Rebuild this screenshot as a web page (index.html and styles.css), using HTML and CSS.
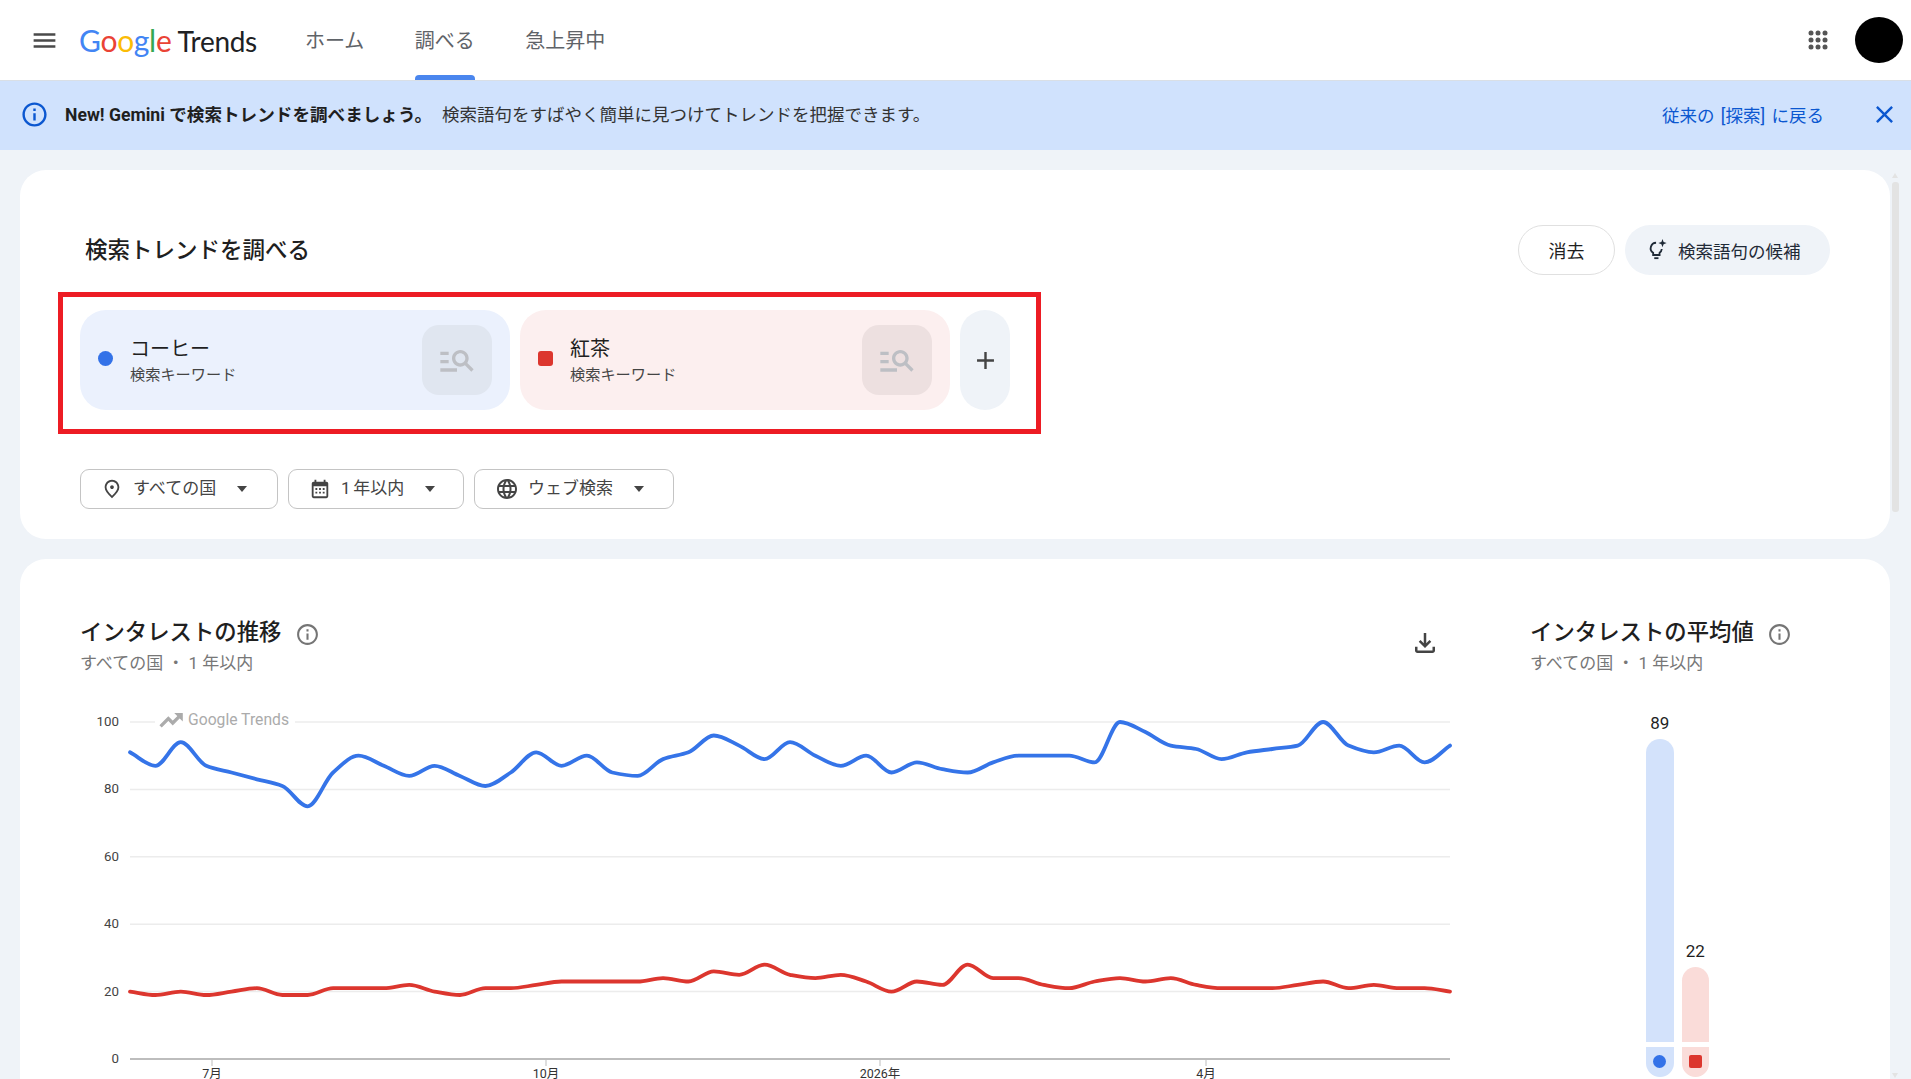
FILE: index.html
```html
<!DOCTYPE html>
<html lang="ja">
<head>
<meta charset="utf-8">
<title>Google Trends</title>
<link rel="stylesheet" href="styles.css">
</head>
<body>
<header class="topbar">
  <svg class="menu-icon" viewBox="0 0 24 24"><path d="M3 18h18v-2H3v2zm0-5h18v-2H3v2zm0-7v2h18V6H3z"/></svg>
  <div class="logo"><span class="c-blue">G</span><span class="c-red">o</span><span class="c-yellow">o</span><span class="c-blue">g</span><span class="c-green">l</span><span class="c-red">e</span><span class="logo-trends">Trends</span></div>
  <nav class="nav">
    <a class="nav-item">ホーム</a>
    <a class="nav-item nav-active">調べる</a>
    <a class="nav-item">急上昇中</a>
  </nav>
  <div class="topbar-right">
    <svg class="apps-icon" viewBox="0 0 20 20"><circle cx="3" cy="3" r="2.5"/><circle cx="10" cy="3" r="2.5"/><circle cx="17" cy="3" r="2.5"/><circle cx="3" cy="10" r="2.5"/><circle cx="10" cy="10" r="2.5"/><circle cx="17" cy="10" r="2.5"/><circle cx="3" cy="17" r="2.5"/><circle cx="10" cy="17" r="2.5"/><circle cx="17" cy="17" r="2.5"/></svg>
    <div class="avatar"></div>
  </div>
</header>

<div class="banner">
  <svg class="banner-info" viewBox="0 0 24 24"><path d="M11 7h2v2h-2zm0 4h2v6h-2zm1-9C6.48 2 2 6.48 2 12s4.48 10 10 10 10-4.48 10-10S17.52 2 12 2zm0 18c-4.41 0-8-3.59-8-8s3.59-8 8-8 8 3.59 8 8-3.59 8-8 8z"/></svg>
  <strong class="banner-strong">New! Gemini で検索トレンドを調べましょう。</strong>
  <span class="banner-text">検索語句をすばやく簡単に見つけてトレンドを把握できます。</span>
  <a class="banner-link">従来の [探索] に戻る</a>
  <svg class="banner-close" viewBox="0 0 24 24"><path d="M19 6.41L17.59 5 12 10.59 6.41 5 5 6.41 10.59 12 5 17.59 6.41 19 12 13.41 17.59 19 19 17.59 13.41 12z"/></svg>
</div>

<main class="main">
  <div class="content">
    <section class="card card-search">
      <div class="search-head">
        <h1 class="search-title">検索トレンドを調べる</h1>
        <div class="search-actions">
          <button class="btn-clear">消去</button>
          <button class="btn-suggest">
            <svg class="bulb-icon" viewBox="0 0 24 24"><path class="bulb-line" d="M11 5.2a6 6 0 0 0-3.2 11v2.3h7v-2.3a6 6 0 0 0 2.4-4.2"/><path class="bulb-line" d="M9 22h4.6"/><path d="M18 1l1.2 3.3 3.3 1.2-3.3 1.2L18 10l-1.2-3.3-3.3-1.2 3.3-1.2z"/></svg>
            <span>検索語句の候補</span>
          </button>
        </div>
      </div>

      <div class="terms">
        <div class="term term-blue">
          <span class="marker marker-dot"></span>
          <div class="term-text">
            <div class="term-name">コーヒー</div>
            <div class="term-type">検索キーワード</div>
          </div>
          <div class="term-search"><svg viewBox="0 0 24 24"><path d="M7 9H2V7h5v2zm0 3H2v2h5v-2zm13.59 7l-3.83-3.83c-.8.52-1.74.83-2.76.83-2.76 0-5-2.24-5-5s2.24-5 5-5 5 2.24 5 5c0 1.02-.31 1.96-.83 2.75L22 17.59 20.59 19zM17 11c0-1.65-1.35-3-3-3s-3 1.35-3 3 1.35 3 3 3 3-1.35 3-3zM2 19h10v-2H2v2z"/></svg></div>
        </div>
        <div class="term term-red">
          <span class="marker marker-square"></span>
          <div class="term-text">
            <div class="term-name">紅茶</div>
            <div class="term-type">検索キーワード</div>
          </div>
          <div class="term-search"><svg viewBox="0 0 24 24"><path d="M7 9H2V7h5v2zm0 3H2v2h5v-2zm13.59 7l-3.83-3.83c-.8.52-1.74.83-2.76.83-2.76 0-5-2.24-5-5s2.24-5 5-5 5 2.24 5 5c0 1.02-.31 1.96-.83 2.75L22 17.59 20.59 19zM17 11c0-1.65-1.35-3-3-3s-3 1.35-3 3 1.35 3 3 3 3-1.35 3-3zM2 19h10v-2H2v2z"/></svg></div>
        </div>
        <div class="term-add"><svg viewBox="0 0 24 24"><path d="M19 13h-6v6h-2v-6H5v-2h6V5h2v6h6v2z"/></svg></div>
        <div class="highlight"></div>
      </div>

      <div class="filters">
        <button class="filter filter-geo">
          <svg class="filter-icon" viewBox="0 0 24 24"><path d="M12 12c-1.1 0-2-.9-2-2s.9-2 2-2 2 .9 2 2-.9 2-2 2zm6-1.8C18 6.57 15.35 4 12 4s-6 2.57-6 6.2c0 2.34 1.95 5.44 6 9.14 4.05-3.7 6-6.8 6-9.14zM12 2c4.2 0 8 3.22 8 8.2 0 3.32-2.67 7.25-8 11.8-5.33-4.55-8-8.48-8-11.8C4 5.22 7.8 2 12 2z"/></svg>
          <span class="filter-label">すべての国</span><i class="caret"></i>
        </button>
        <button class="filter filter-time">
          <svg class="filter-icon" viewBox="0 0 24 24"><path d="M19 4h-1V2h-2v2H8V2H6v2H5a2 2 0 0 0-2 2v14a2 2 0 0 0 2 2h14a2 2 0 0 0 2-2V6a2 2 0 0 0-2-2zm0 16H5V9h14v11zM7 11h2v2H7zm4 0h2v2h-2zm4 0h2v2h-2zm-8 4h2v2H7zm4 0h2v2h-2zm4 0h2v2h-2z"/></svg>
          <span class="filter-label">1 年以内</span><i class="caret"></i>
        </button>
        <button class="filter filter-type">
          <svg class="filter-icon filter-icon-globe" viewBox="0 0 24 24"><path d="M11.99 2C6.47 2 2 6.48 2 12s4.47 10 9.99 10C17.52 22 22 17.52 22 12S17.52 2 11.99 2zm6.93 6h-2.95c-.32-1.25-.78-2.45-1.38-3.56 1.84.63 3.37 1.91 4.33 3.56zM12 4.04c.83 1.2 1.48 2.53 1.91 3.96h-3.82c.43-1.43 1.08-2.76 1.91-3.96zM4.26 14C4.1 13.36 4 12.69 4 12s.1-1.36.26-2h3.38c-.08.66-.14 1.32-.14 2 0 .68.06 1.34.14 2H4.26zm.82 2h2.95c.32 1.25.78 2.45 1.38 3.56-1.84-.63-3.37-1.9-4.33-3.56zm2.95-8H5.08c.96-1.66 2.49-2.93 4.33-3.56C8.81 5.55 8.35 6.75 8.03 8zM12 19.96c-.83-1.2-1.48-2.53-1.91-3.96h3.82c-.43 1.43-1.08 2.76-1.91 3.96zM14.34 14H9.66c-.09-.66-.16-1.32-.16-2 0-.68.07-1.35.16-2h4.68c.09.65.16 1.32.16 2 0 .68-.07 1.34-.16 2zm.25 5.56c.6-1.11 1.06-2.31 1.38-3.56h2.95c-.96 1.65-2.49 2.93-4.33 3.56zM16.36 14c.08-.66.14-1.32.14-2 0-.68-.06-1.34-.14-2h3.38c.16.64.26 1.31.26 2s-.1 1.36-.26 2h-3.38z"/></svg>
          <span class="filter-label">ウェブ検索</span><i class="caret"></i>
        </button>
      </div>
    </section>

    <section class="card card-chart">
      <div class="chart-col">
        <div class="section-head">
          <div>
            <div class="section-title-row">
              <h2 class="section-title">インタレストの推移</h2>
              <svg class="title-info" viewBox="0 0 24 24"><path d="M11 7h2v2h-2zm0 4h2v6h-2zm1-9C6.48 2 2 6.48 2 12s4.48 10 10 10 10-4.48 10-10S17.52 2 12 2zm0 18c-4.41 0-8-3.59-8-8s3.59-8 8-8 8 3.59 8 8-3.59 8-8 8z"/></svg>
            </div>
            <div class="section-sub">すべての国 ・ 1 年以内</div>
          </div>
          <svg class="download-icon" viewBox="0 0 24 24"><path d="M18 15v3H6v-3H4v3c0 1.1.9 2 2 2h12c1.1 0 2-.9 2-2v-3h-2zm-1-4l-1.41-1.41L13 12.17V4h-2v8.17L8.41 9.59 7 11l5 5 5-5z"/></svg>
        </div>
        <svg class="chart" viewBox="80 700 1380 379">
          <g class="grid">
            <line x1="130" x2="1450" y1="722" y2="722"/>
            <line x1="130" x2="1450" y1="789.4" y2="789.4"/>
            <line x1="130" x2="1450" y1="856.8" y2="856.8"/>
            <line x1="130" x2="1450" y1="924.2" y2="924.2"/>
            <line x1="130" x2="1450" y1="991.6" y2="991.6"/>
          </g>
          <g class="y-labels">
            <text x="119" y="726">100</text>
            <text x="119" y="793">80</text>
            <text x="119" y="861">60</text>
            <text x="119" y="928">40</text>
            <text x="119" y="996">20</text>
            <text x="119" y="1063">0</text>
          </g>
          <rect class="wm-bg" x="155" y="712" width="140" height="20"/>
          <path class="wm-icon" transform="translate(158 707) scale(1.1)" d="M16 6l2.29 2.29-4.88 4.88-4-4L2 16.59 3.41 18l6-6 4 4 6.3-6.29L22 12V6z"/>
          <text class="wm-text" x="188" y="725">Google Trends</text>
          <line class="axis" x1="130" x2="1450" y1="1059" y2="1059"/>
          <g class="ticks">
            <line x1="212" x2="212" y1="1059" y2="1066"/>
            <line x1="546" x2="546" y1="1059" y2="1066"/>
            <line x1="880" x2="880" y1="1059" y2="1066"/>
            <line x1="1206" x2="1206" y1="1059" y2="1066"/>
          </g>
          <g class="x-labels">
            <text x="212" y="1078">7月</text>
            <text x="546" y="1078">10月</text>
            <text x="880" y="1078">2026年</text>
            <text x="1206" y="1078">4月</text>
          </g>
          <path id="line-red" class="line line-red"/>
          <path id="line-blue" class="line line-blue"/>
        </svg>
      </div>
      <div class="avg-col">
        <div class="section-title-row">
          <h2 class="section-title">インタレストの平均値</h2>
          <svg class="title-info" viewBox="0 0 24 24"><path d="M11 7h2v2h-2zm0 4h2v6h-2zm1-9C6.48 2 2 6.48 2 12s4.48 10 10 10 10-4.48 10-10S17.52 2 12 2zm0 18c-4.41 0-8-3.59-8-8s3.59-8 8-8 8 3.59 8 8-3.59 8-8 8z"/></svg>
        </div>
        <div class="section-sub">すべての国 ・ 1 年以内</div>
        <div class="bars">
          <div class="bar bar-blue">
            <div class="bar-value">89</div>
            <div class="bar-fill" style="height:303px"></div>
            <div class="bar-foot"><span class="foot-dot"></span></div>
          </div>
          <div class="bar bar-red">
            <div class="bar-value">22</div>
            <div class="bar-fill" style="height:75px"></div>
            <div class="bar-foot"><span class="foot-square"></span></div>
          </div>
        </div>
      </div>
    </section>
  </div>
  <aside class="rail">
    <i class="rail-up"></i>
    <div class="rail-thumb"></div>
    <i class="rail-down"></i>
  </aside>
</main>
<script src="script.js"></script>
</body>
</html>
```

FILE: styles.css
```css
* { box-sizing: border-box; }
html, body { margin: 0; height: 100%; }
body {
  display: flex;
  flex-direction: column;
  height: 1079px;
  overflow: hidden;
  background: #eff3f8;
  color: #1f1f1f;
  font-family: Roboto, "Noto Sans CJK JP", sans-serif;
}
h1, h2 { margin: 0; font-weight: 500; }
button { font-family: inherit; cursor: pointer; }

.topbar {
  display: flex;
  align-items: center;
  flex: none;
  height: 80px;
  padding-left: 30px;
  background: #fff;
}
.menu-icon { width: 29px; height: 29px; fill: #4a4a4a; }
.logo {
  margin-left: 20px;
  font-family: Lato, sans-serif;
  font-size: 30px;
  letter-spacing: -0.3px;
  line-height: 40px;
  white-space: nowrap;
}
.c-blue { color: #4285f4; }
.c-red { color: #ea4335; }
.c-yellow { color: #fbbc05; }
.c-green { color: #34a853; }
.logo-trends { margin-left: 6px; font-size: 28px; letter-spacing: -0.3px; color: #202124; }
.nav { display: flex; gap: 50.5px; margin-left: 48px; }
.nav-item {
  position: relative;
  display: flex;
  align-items: center;
  height: 80px;
  padding-bottom: 2px;
  font-size: 20px;
  color: #5f6368;
}
.nav-active::after {
  content: "";
  position: absolute;
  left: 0;
  right: 0;
  bottom: 0;
  height: 5px;
  border-radius: 4px 4px 0 0;
  background: #4a86ee;
}
.topbar-right { display: flex; align-items: center; margin-left: auto; padding-right: 8px; }
.apps-icon { width: 20px; height: 20px; fill: #555; }
.avatar { width: 48px; height: 46px; margin-left: 27px; border-radius: 50%; background: #000; }

.banner {
  display: flex;
  align-items: center;
  flex: none;
  height: 70px;
  padding: 0 12px 3px 20px;
  border-top: 1px solid #d9dfe6;
  background: #d0e2fd;
  font-size: 17.5px;
}
.banner-info { width: 29px; height: 29px; fill: #0b57d0; }
.banner-strong { margin: 0 0 2px 16px; font-size: 17.6px; font-weight: 700; color: #1f1f1f; }
.banner-text { margin: 0 0 2px 10px; color: #333; }
.banner-link { margin-left: auto; color: #0b57d0; word-spacing: 2px; }
.banner-close { width: 29px; height: 29px; margin-left: 46px; fill: #0b57d0; }

.main { display: flex; flex: 1; min-height: 0; padding: 20px 0 0 20px; overflow: hidden; }
.content { display: flex; flex-direction: column; flex: none; gap: 20px; width: 1870px; }
.card { flex: none; border-radius: 26px; background: #fff; }

.card-search { height: 369px; padding: 55px 60px 0; }
.search-head { display: flex; align-items: center; justify-content: space-between; height: 50px; }
.search-title { margin: -4px 0 0 5px; font-size: 22.5px; }
.search-actions { display: flex; gap: 10px; }
.btn-clear {
  width: 97px;
  height: 50px;
  border: 1px solid #e0e0e0;
  border-radius: 25px;
  background: #fff;
  color: #1f1f1f;
  font-size: 18px;
}
.btn-suggest {
  display: flex;
  align-items: center;
  width: 205px;
  height: 50px;
  padding: 0 0 0 21px;
  border: 0;
  border-radius: 25px;
  background: #eff3f8;
  color: #1f2a37;
  font-size: 17.5px;
}
.bulb-icon { width: 22px; height: 22px; margin: -2px 10px 0 0; fill: #1f2a37; }
.bulb-line { fill: none; stroke: #1f2a37; stroke-width: 2; }

.terms { position: relative; display: inline-flex; gap: 10px; margin-top: 35px; vertical-align: top; }
.term { display: flex; align-items: center; width: 430px; height: 100px; padding: 0 18px; border-radius: 26px; }
.term-blue { background: #ebf1fd; }
.term-red { background: #fcefef; }
.marker { flex: none; width: 15px; height: 15px; margin-top: -4px; }
.marker-dot { border-radius: 50%; background: #3372e8; }
.marker-square { border-radius: 3px; background: #dc362e; }
.term-text { margin-left: 17px; }
.term-name { font-size: 20px; line-height: 28px; color: #1f1f1f; }
.term-type { margin-top: 2px; font-size: 15.2px; line-height: 20px; color: #444; }
.term-search {
  display: flex;
  align-items: center;
  justify-content: center;
  width: 70px;
  height: 70px;
  margin-left: auto;
  border-radius: 17px;
}
.term-blue .term-search { background: #e0e6f0; }
.term-red .term-search { background: #ede0e0; }
.term-search svg { width: 40px; height: 40px; fill: #bdbfc4; }
.term-add {
  display: flex;
  align-items: center;
  justify-content: center;
  width: 50px;
  height: 100px;
  border-radius: 25px;
  background: #eff3f8;
}
.term-add svg { width: 29px; height: 29px; fill: #444; }
.highlight {
  position: absolute;
  inset: -18px -31px -24px -22px;
  border: 5px solid #ed1c24;
  pointer-events: none;
}

.filters { display: flex; gap: 10px; margin-top: 59px; }
.filter {
  display: flex;
  align-items: center;
  height: 40px;
  padding: 0 0 0 20px;
  border: 1px solid #c4c4c4;
  border-radius: 9px;
  background: #fff;
  color: #444;
  font-size: 17px;
}
.filter-geo { width: 198px; }
.filter-time { width: 176px; }
.filter-time .filter-label { word-spacing: -1.5px; }
.filter-type { width: 200px; }
.filter-label { margin-top: -6px; }
.filter-icon { flex: none; width: 22px; height: 22px; margin-right: 10px; fill: #444; }
.filter-icon-globe { width: 24px; height: 24px; margin-right: 9px; }
.caret {
  flex: none;
  width: 0;
  height: 0;
  margin-left: 21px;
  border-top: 6px solid #444;
  border-left: 5.5px solid transparent;
  border-right: 5.5px solid transparent;
}

.card-chart { display: flex; gap: 70px; height: 560px; padding: 58px 0 0 60px; }
.chart-col { flex: none; width: 1380px; }
.section-head { display: flex; justify-content: space-between; width: 1360px; }
.section-title-row { display: flex; align-items: center; height: 30px; }
.section-title { font-size: 22.4px; line-height: 30px; }
.title-info { width: 25px; height: 25px; margin: 4px 0 0 13px; fill: #757575; }
.section-sub { margin-top: 5px; font-size: 17px; line-height: 22px; color: #777; }
.download-icon { width: 30px; height: 30px; margin-top: 11px; fill: #444; }

.chart { display: block; width: 1380px; height: 379px; margin-top: 26px; }
.grid line { stroke: #ececec; stroke-width: 1.5; }
.y-labels text { font-size: 13.3px; fill: #444; text-anchor: end; }
.x-labels text { font-size: 12.5px; fill: #333; text-anchor: middle; }
.wm-bg { fill: #fff; }
.wm-icon { fill: #ababab; stroke: #ababab; stroke-width: 1; }
.wm-text { font-size: 15.7px; fill: #ababab; }
.axis { stroke: #bdbdbd; stroke-width: 2; }
.ticks line { stroke: #bdbdbd; stroke-width: 1; }
.line { fill: none; stroke-width: 3.8; stroke-linecap: round; stroke-linejoin: round; }
.line-blue { stroke: #3574e8; }
.line-red { stroke: #dc362e; }

.avg-col { flex: none; }
.bars { display: flex; align-items: flex-end; gap: 8px; height: 377px; margin-top: 26px; padding-left: 116px; }
.bar { display: flex; flex-direction: column; width: 27.5px; }
.bar-value { margin-bottom: 5px; font-size: 17px; line-height: 22px; text-align: center; color: #1f1f1f; }
.bar-fill { border-radius: 14px 14px 0 0; }
.bar-foot {
  display: flex;
  align-items: center;
  justify-content: center;
  height: 30px;
  margin-top: 5px;
  padding-bottom: 2px;
  border-radius: 0 0 14px 14px;
}
.bar-blue .bar-fill, .bar-blue .bar-foot { background: #d3e2fb; }
.bar-red .bar-fill, .bar-red .bar-foot { background: #fadcd9; }
.foot-dot { width: 13px; height: 13px; border-radius: 50%; background: #3372e8; }
.foot-square { width: 13px; height: 13px; border-radius: 2px; background: #dc362e; }

.rail { display: flex; flex-direction: column; flex: none; width: 21px; padding: 3px 0 1px 2px; }
.rail-up, .rail-down {
  width: 0;
  height: 0;
  border-left: 3.5px solid transparent;
  border-right: 3.5px solid transparent;
}
.rail-up { border-bottom: 5px solid #e3e3e3; }
.rail-down { margin-top: auto; border-top: 5px solid #e3e3e3; }
.rail-thumb { width: 7px; height: 330px; margin-top: 4px; border-radius: 3px; background: #e3e3e3; }
```

FILE: script.js
```js
var blue = [91,87,94,87,85,83,81,75,85,90,87,84,87,84,81,85,91,87,90,85,84,89,91,96,93,89,94,90,87,90,85,88,86,85,88,90,90,90,88,100,97,93,92,89,91,92,93,100,93,91,93,88,93];
var red = [20,19,20,19,20,21,19,19,21,21,21,22,20,19,21,21,22,23,23,23,23,24,23,26,25,28,25,24,25,23,20,23,22,28,24,24,22,21,23,24,23,24,22,21,21,21,22,23,21,22,21,21,20];

function toPoints(values) {
  var step = 1320 / (values.length - 1);
  return values.map(function (v, i) {
    return [130 + i * step, 1059 - v * 3.37];
  });
}

// Monotone cubic interpolation: the curve never overshoots the data.
function monotonePath(pts) {
  var n = pts.length, slopes = [], tangents = [], i;
  for (i = 0; i < n - 1; i++) {
    slopes.push((pts[i + 1][1] - pts[i][1]) / (pts[i + 1][0] - pts[i][0]));
  }
  tangents[0] = slopes[0];
  tangents[n - 1] = slopes[n - 2];
  for (i = 1; i < n - 1; i++) {
    tangents[i] = slopes[i - 1] * slopes[i] <= 0 ? 0 : 2 * slopes[i - 1] * slopes[i] / (slopes[i - 1] + slopes[i]);
  }
  var d = "M" + pts[0][0].toFixed(1) + " " + pts[0][1].toFixed(1);
  for (i = 0; i < n - 1; i++) {
    var dx = (pts[i + 1][0] - pts[i][0]) / 3;
    d += "C" + (pts[i][0] + dx).toFixed(1) + " " + (pts[i][1] + tangents[i] * dx).toFixed(1) +
      " " + (pts[i + 1][0] - dx).toFixed(1) + " " + (pts[i + 1][1] - tangents[i + 1] * dx).toFixed(1) +
      " " + pts[i + 1][0].toFixed(1) + " " + pts[i + 1][1].toFixed(1);
  }
  return d;
}

document.getElementById("line-blue").setAttribute("d", monotonePath(toPoints(blue)));
document.getElementById("line-red").setAttribute("d", monotonePath(toPoints(red)));
```
